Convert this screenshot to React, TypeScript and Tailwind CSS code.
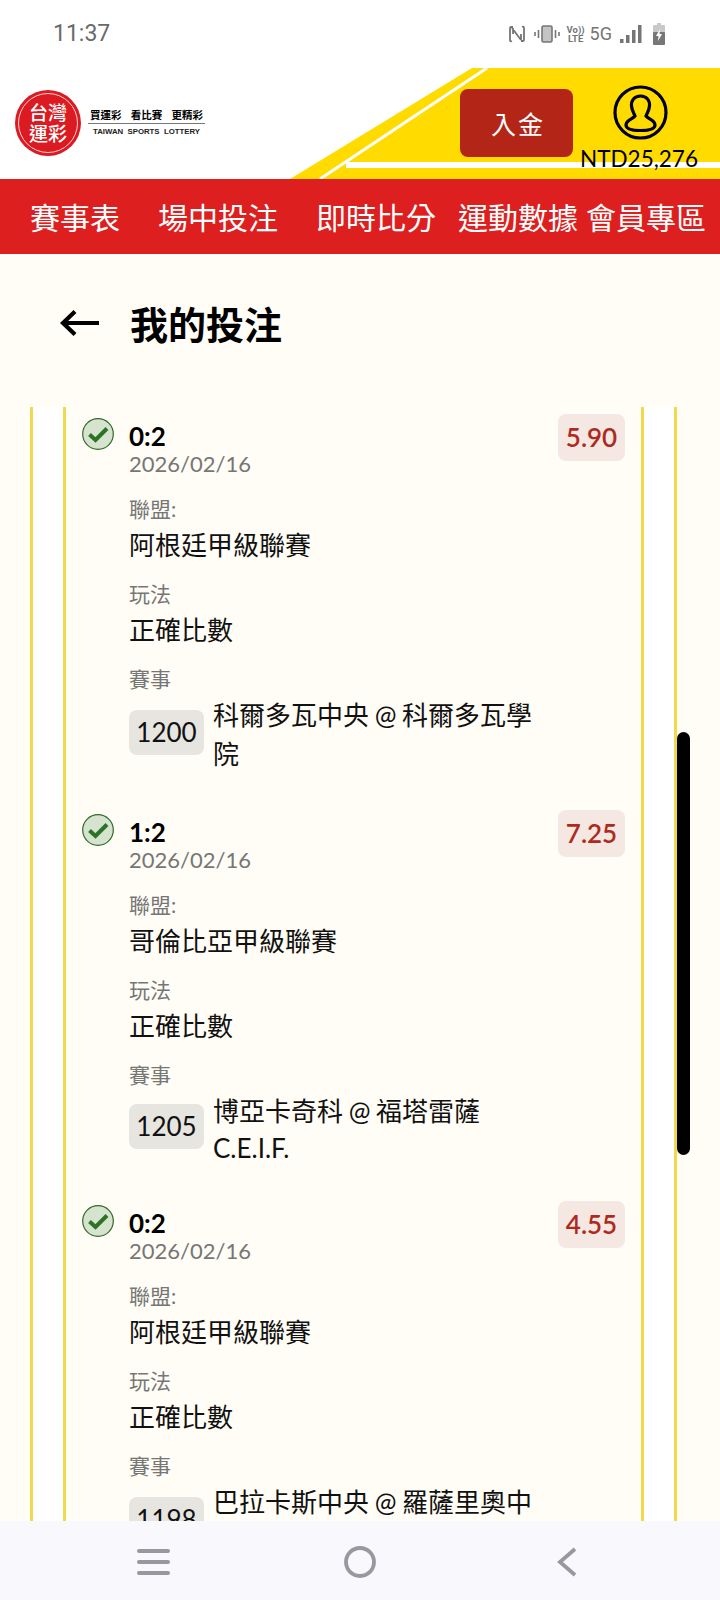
import React from "react";

const font = "font-['Lato','Noto_Sans_CJK_TC',sans-serif]";

const bets = [
  {
    score: "0:2",
    odds: "5.90",
    league: "阿根廷甲級聯賽",
    code: "1200",
    lines: [
      { text: "科爾多瓦中央 @ 科爾多瓦學", cls: "leading-[39px]" },
      { text: "院", cls: "leading-[39px]" },
    ],
    cls: "mb-[43px]",
  },
  {
    score: "1:2",
    odds: "7.25",
    league: "哥倫比亞甲級聯賽",
    code: "1205",
    lines: [
      { text: "博亞卡奇科 @ 福塔雷薩", cls: "leading-[39px]" },
      { text: "C.E.I.F.", cls: "leading-[34px]" },
    ],
    cls: "mb-[43px]",
  },
  {
    score: "0:2",
    odds: "4.55",
    league: "阿根廷甲級聯賽",
    code: "1198",
    lines: [
      { text: "巴拉卡斯中央 @ 羅薩里奧中", cls: "leading-[39px]" },
      { text: "央", cls: "leading-[39px]" },
    ],
    cls: "",
  },
];

function StatusIcons() {
  return (
    <div className="flex items-center text-[#757575]">
      <svg width="18" height="20" viewBox="0 0 18 20" fill="none" stroke="currentColor" strokeWidth="1.8" className="mr-[8px]">
        <path d="M5 3 H3 Q2 3 2 5 V16 Q2 18 4 17 M13 17 H15 Q16 17 16 15 V4 Q16 2 14 3 M4 4 L13 16 M5 4 V10 M13 10 V16" />
      </svg>
      <svg width="26" height="18" viewBox="0 0 26 18" fill="none" stroke="currentColor" strokeWidth="1.6" className="mr-[7px]">
        <rect x="8" y="1" width="10" height="16" rx="1.5" fill="#c4c4c4" />
        <path d="M4.5 5 V13 M1 7 V11 M21.5 5 V13 M25 7 V11" />
      </svg>
      <div className="mr-[5px] flex w-[18px] flex-col items-center font-['Roboto',sans-serif] text-[9.5px] leading-[9px] font-bold">
        <span>Vo))</span>
        <span>LTE</span>
      </div>
      <span className="mr-[8px] font-['Roboto',sans-serif] text-[18px] leading-none">5G</span>
      <svg width="22" height="20" viewBox="0 0 22 20" fill="currentColor" className="mr-[11px]">
        <rect x="0" y="15" width="3.5" height="4" />
        <rect x="6" y="11" width="3.5" height="8" />
        <rect x="12" y="6" width="3.5" height="13" />
        <rect x="18" y="1" width="3.5" height="18" />
      </svg>
      <svg width="12" height="22" viewBox="0 0 12 22">
        <path d="M4 0 H8 V2 H11 Q12 2 12 3 V21 Q12 22 11 22 H1 Q0 22 0 21 V3 Q0 2 1 2 H4 Z" fill="#c9c9c9" />
        <rect x="0" y="9" width="12" height="13" rx="1" fill="#777" />
        <path d="M7 6 L3 13 H5.5 L5 18 L9 11 H6.5 Z" fill="#fff" />
      </svg>
    </div>
  );
}

function Logo() {
  return (
    <div className="flex items-center">
      <div className="flex h-[66px] w-[66px] shrink-0 items-center justify-center rounded-full bg-[#DB1A21]">
        <div className="flex h-[60px] w-[60px] flex-col items-center justify-center rounded-full border border-white/80 text-[19px] leading-[21px] font-medium text-white">
          <span>台灣</span>
          <span>運彩</span>
        </div>
      </div>
      <div className="ml-[7px] flex w-[117px] flex-col items-center">
        <div className="flex w-[113px] justify-between text-[10.5px] leading-[14px] font-bold whitespace-nowrap text-black">
          <span>買運彩</span>
          <span>看比賽</span>
          <span>更精彩</span>
        </div>
        <div className="my-[1px] h-px w-full bg-[#777]" />
        <div className="font-['Liberation_Sans',sans-serif] text-[7.8px] leading-[14px] font-bold whitespace-nowrap text-[#222]">
          TAIWAN&nbsp;&nbsp;SPORTS&nbsp;&nbsp;LOTTERY
        </div>
      </div>
    </div>
  );
}

function Header() {
  return (
    <header className="relative flex h-[111px] shrink-0 items-center bg-white pl-[15px]">
      <svg className="absolute inset-0" width="720" height="111" viewBox="0 0 720 111">
        <polygon points="472,0 720,0 720,111 290,111" fill="#FFDB00" />
        <path d="M487 0 L320 111" stroke="#fff" strokeWidth="3" fill="none" />
        <rect x="346" y="94" width="374" height="6" fill="#fff" />
      </svg>
      <div className="relative mt-[-1px]">
        <Logo />
      </div>
      <div className="absolute top-[21px] left-[460px] flex h-[68px] w-[113px] items-center justify-center rounded-[8px] bg-[#B32517] pt-[4px] pl-[3px] text-[25px] tracking-[2px] text-white">
        入金
      </div>
      <svg className="absolute top-[17px] left-[613px]" width="55" height="55" viewBox="0 0 55 55" fill="none" stroke="#000" strokeWidth="3.2">
        <circle cx="27.5" cy="27.5" r="25.5" />
        <path d="M27.5 11 C21 11 18 16 18.500 21 C19 26 21 28 22 31 C20 34 13 35 13 40 C13 44 20 45.500 27.500 45.500 C35 45.500 42 44 42 40 C42 35 35 34 33 31 C34 28 36 26 36.500 21 C37 16 34 11 27.500 11 Z" />
      </svg>
      <div className="absolute top-[77px] left-[580px] text-[22.500px] leading-[28px] text-black">NTD25,276</div>
    </header>
  );
}

const navItems = [
  { label: "賽事表", cls: "ml-[30px]" },
  { label: "場中投注", cls: "ml-[38px]" },
  { label: "即時比分", cls: "ml-[38px]" },
  { label: "運動數據", cls: "ml-[22px]" },
  { label: "會員專區", cls: "ml-[8px]" },
];

function Bet({ bet }: { bet: (typeof bets)[number] }) {
  return (
    <div className={`relative pl-[63px] ${bet.cls}`}>
      <svg className="absolute top-[-3px] left-[16px]" width="32" height="32" viewBox="0 0 32 32">
        <circle cx="16" cy="16" r="15.300" fill="#D5E3CF" stroke="#2F6B2A" strokeWidth="1.200" />
        <path d="M7.500 16.500 L13.500 22 L25 10.500" fill="none" stroke="#2E7325" strokeWidth="4" />
      </svg>
      <div className="absolute top-[-7px] right-[16px] flex h-[47px] w-[67px] items-center justify-center rounded-[8px] bg-[#F5E8E2] text-[26px] font-semibold text-[#AE2A20]">
        {bet.odds}
      </div>
      <div className="text-[26px] leading-[30px] font-bold text-black">{bet.score}</div>
      <div className="text-[22px] leading-[25px] text-[#767676]">2026/02/16</div>
      <div className="mt-[17px] mb-[1px] text-[21px] leading-[32px] text-[#767676]">聯盟:</div>
      <div className="text-[26px] leading-[38px] text-[#111]">{bet.league}</div>
      <div className="mt-[14px] mb-[1px] text-[21px] leading-[32px] text-[#767676]">玩法</div>
      <div className="text-[26px] leading-[38px] text-[#111]">正確比數</div>
      <div className="mt-[14px] mb-[1px] text-[21px] leading-[32px] text-[#767676]">賽事</div>
      <div className="flex items-center">
        <div className="mt-[-5px] flex h-[45px] w-[75px] shrink-0 items-center justify-center rounded-[8px] bg-[#E6E5E0] text-[26px] text-[#111]">
          {bet.code}
        </div>
        <div className="ml-[9px] text-[26px] text-[#111] [word-spacing:-1px]">
          {bet.lines.map((l) => (
            <div key={l.text} className={`whitespace-nowrap ${l.cls}`}>
              {l.text}
            </div>
          ))}
        </div>
      </div>
    </div>
  );
}

export default function App() {
  return (
    <div className={`relative flex h-[1600px] w-[720px] flex-col overflow-hidden bg-[#FFFDF5] ${font}`}>
      <div className="flex h-[68px] shrink-0 items-center justify-between bg-white pr-[55px] pl-[53px]">
        <span className="font-['Roboto',sans-serif] text-[23px] text-[#6a6a6a]">11:37</span>
        <StatusIcons />
      </div>

      <Header />

      <nav className="flex h-[75px] shrink-0 items-center bg-[#DE1F20] pt-[2px] text-[30px] whitespace-nowrap text-white">
        {navItems.map((n) => (
          <span key={n.label} className={n.cls}>
            {n.label}
          </span>
        ))}
      </nav>

      <div className="flex h-[153px] shrink-0 items-start pt-[47px] pl-[59px]">
        <svg className="mt-[5px]" width="42" height="34" viewBox="0 0 42 34" fill="none" stroke="#000" strokeWidth="4.200">
          <path d="M40 17 H4 M16 5.500 L4 17 L16 28.500" />
        </svg>
        <h1 className="ml-[29px] text-[38px] leading-[46px] font-bold text-black">我的投注</h1>
      </div>

      <main className="relative min-h-0 flex-1 overflow-hidden pr-[43px] pl-[30px]">
        <div className="h-full border-x-[3px] border-[#F2D84B] bg-white px-[30px]">
          <div className="h-full border-x-[3px] border-[#F2D84B] bg-[#FFFDF5] pt-[14px]">
            {bets.map((b) => (
              <Bet key={b.code} bet={b} />
            ))}
          </div>
        </div>
        <div className="absolute top-[325px] left-[677px] h-[423px] w-[13px] rounded-full bg-black" />
      </main>

      <div className="flex h-[79px] shrink-0 items-center bg-[#F8F8FD] pt-[2px] text-[#98989F]">
        <svg className="ml-[137px]" width="34" height="26" viewBox="0 0 34 26" fill="currentColor">
          <rect x="0" y="0" width="33" height="4" rx="2" />
          <rect x="0" y="11" width="33" height="4" rx="2" />
          <rect x="0" y="22" width="33" height="4" rx="2" />
        </svg>
        <svg className="ml-[173px]" width="32" height="32" viewBox="0 0 32 32" fill="none" stroke="currentColor" strokeWidth="3.800">
          <circle cx="16" cy="16" r="14" />
        </svg>
        <svg className="ml-[180px]" width="22" height="30" viewBox="0 0 22 30" fill="none" stroke="currentColor" strokeWidth="3.800">
          <path d="M19 2 L4 15 L19 28" />
        </svg>
      </div>
    </div>
  );
}
